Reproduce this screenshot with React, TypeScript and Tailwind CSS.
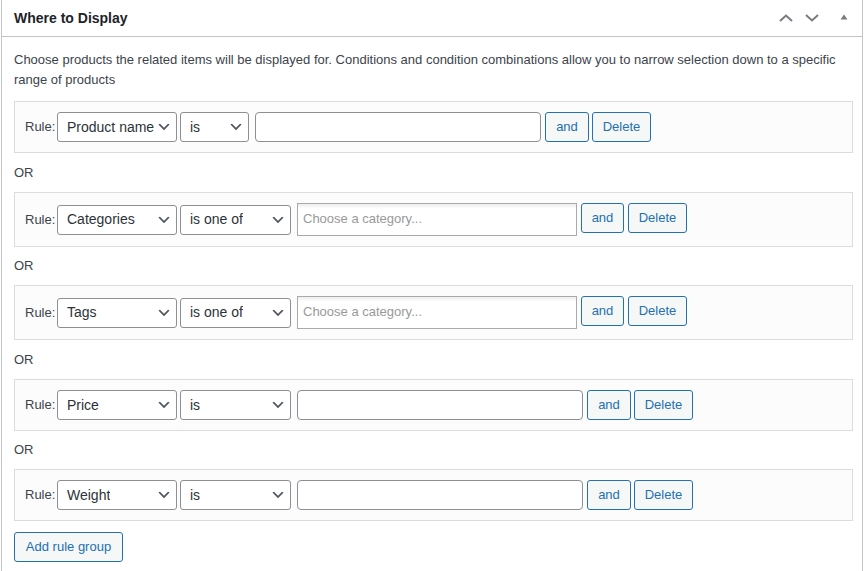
import type { ReactNode } from 'react'

const fontCls = "font-['Liberation_Sans',Arial,sans-serif]"

function SelectChevron() {
  return (
    <svg viewBox="0 0 20 20" className="h-4 w-4 shrink-0" aria-hidden="true">
      <path d="M5 6l5 5 5-5 2 1-7 7-7-7 2-1z" fill="#50575e" />
    </svg>
  )
}

function FakeSelect({ value, width }: { value: string; width: string }) {
  return (
    <div className={`flex h-[30px] ${width} shrink-0 items-center justify-between rounded-[3px] border border-[#8c8f94] bg-white pl-[9px] pr-[4px] text-[14px] text-[#2c3338]`}>
      <span className="truncate">{value}</span>
      <SelectChevron />
    </div>
  )
}

function TextInput({ width }: { width: string }) {
  return <div className={`h-[30px] ${width} shrink-0 rounded-[4px] border border-[#8c8f94] bg-white`} />
}

function ChosenInput({ width }: { width: string }) {
  return (
    <div className={`flex h-[33px] ${width} shrink-0 items-center border border-[#aaaaaa] bg-gradient-to-b from-[#eeeeee] from-[1%] to-white to-[15%] px-[5px] pb-px text-[13px] text-[#999999]`}>
      Choose a category...
    </div>
  )
}

function WpButton({ children, width, className = '' }: { children: ReactNode; width: string; className?: string }) {
  return (
    <button
      type="button"
      className={`flex h-[30px] ${width} shrink-0 items-center justify-center self-start rounded-[3px] border border-[#2271b1] bg-[#f6f7f7] text-[13px] text-[#2271b1] ${className}`}
    >
      {children}
    </button>
  )
}

interface RuleGroupProps {
  field: string
  operator: string
  operatorWidth: string
  chosen?: boolean
}

function RuleGroup({ field, operator, operatorWidth, chosen = false }: RuleGroupProps) {
  return (
    <div className="flex items-center border border-[#dcdcde] bg-[#fcfcfc] p-[10px]">
      <span className="w-[32px] shrink-0 text-[13px] text-[#3c434a]">Rule:</span>
      <FakeSelect value={field} width="w-[120px]" />
      <div className="ml-[3px]">
        <FakeSelect value={operator} width={operatorWidth} />
      </div>
      <div className="ml-[6px]">
        {chosen ? <ChosenInput width="w-[280px]" /> : <TextInput width="w-[286px]" />}
      </div>
      <WpButton width={chosen ? 'w-[43px]' : 'w-[44px]'} className="ml-[4px]">and</WpButton>
      <WpButton width="w-[59px]" className={chosen ? 'ml-[4px]' : 'ml-[3px]'}>Delete</WpButton>
    </div>
  )
}

function OrLabel({ tall = true }: { tall?: boolean }) {
  return (
    <div className={`flex ${tall ? 'h-[39px]' : 'h-[38px]'} items-center text-[13px] text-[#3c434a]`}>OR</div>
  )
}

function HeaderIcons() {
  return (
    <div className="flex items-center gap-[12px] pr-[14px]">
      <svg viewBox="0 0 14 8" className="h-[8px] w-[14px]" aria-hidden="true">
        <path d="M1 7l6-5.5 6 5.5" fill="none" stroke="#787c82" strokeWidth="2" />
      </svg>
      <svg viewBox="0 0 14 8" className="h-[8px] w-[14px]" aria-hidden="true">
        <path d="M1 1l6 5.5 6-5.5" fill="none" stroke="#787c82" strokeWidth="2" />
      </svg>
      <svg viewBox="0 0 8 6" className="mb-[3px] ml-[9px] h-[6px] w-[8px]" aria-hidden="true">
        <path d="M4 0.5l3.5 5h-7z" fill="#787c82" />
      </svg>
    </div>
  )
}

export default function App() {
  return (
    <div className={`min-h-[571px] bg-white pl-px ${fontCls}`}>
      <div className="min-h-[571px] w-[862px] border-x border-[#c3c4c7] bg-white">
        <div className="flex h-[37px] items-center justify-between border-b border-[#c3c4c7] pl-[12px]">
          <h2 className="text-[14px] font-semibold text-[#1d2327]">Where to Display</h2>
          <HeaderIcons />
        </div>
        <div className="pl-[12px] pr-[9px]">
          <p className="mb-[12px] mt-[13px] text-[13px] leading-[19.5px] text-[#3c434a]">
            Choose products the related items will be displayed for. Conditions and condition combinations allow you to narrow selection down to a specific range of products
          </p>
          <RuleGroup field="Product name" operator="is" operatorWidth="w-[69px]" />
          <OrLabel />
          <RuleGroup field="Categories" operator="is one of" operatorWidth="w-[111px]" chosen />
          <OrLabel tall={false} />
          <RuleGroup field="Tags" operator="is one of" operatorWidth="w-[111px]" chosen />
          <OrLabel />
          <RuleGroup field="Price" operator="is" operatorWidth="w-[111px]" />
          <OrLabel tall={false} />
          <RuleGroup field="Weight" operator="is" operatorWidth="w-[111px]" />
          <button
            type="button"
            className="mt-[11px] flex h-[30px] w-[109px] items-center justify-center rounded-[3px] border border-[#2271b1] bg-[#f6f7f7] text-[13px] text-[#2271b1]"
          >
            Add rule group
          </button>
        </div>
      </div>
    </div>
  )
}
